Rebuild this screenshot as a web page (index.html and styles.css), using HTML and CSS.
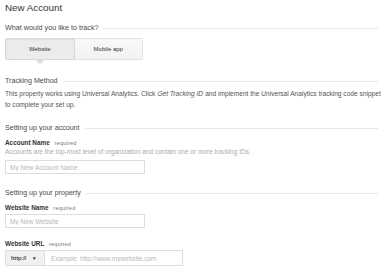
FILE: index.html
```html
<!DOCTYPE html>
<html lang="en">
<head>
  <meta charset="UTF-8"/>
  <title>New Account</title>
  <link rel="stylesheet" href="styles.css">
</head>
<body>
  <div class="page">
    <h1 class="title">New Account</h1>

    <!-- What to track -->
    <div class="section-head first">What would you like to track?</div>
    <div class="segment">
      <button class="seg-btn active">Website</button>
      <button class="seg-btn">Mobile app</button>
    </div>

    <!-- Tracking method -->
    <div class="section-head method">Tracking Method</div>
    <p class="note">This property works using Universal Analytics. Click <em>Get Tracking ID</em> and implement the Universal Analytics tracking code snippet to complete your set up.</p>

    <!-- Account -->
    <div class="section-head">Setting up your account</div>
    <div class="field">
      <label class="field-label">Account Name <span class="req">required</span></label>
      <div class="hint">Accounts are the top-most level of organization and contain one or more tracking IDs.</div>
      <input class="text-input" type="text" placeholder="My New Account Name"/>
    </div>

    <!-- Property -->
    <div class="section-head property">Setting up your property</div>
    <div class="field">
      <label class="field-label">Website Name <span class="req">required</span></label>
      <input class="text-input" type="text" placeholder="My New Website"/>
    </div>
    <div class="field url-field">
      <label class="field-label">Website URL <span class="req">required</span></label>
      <div class="url-group">
        <div class="proto">http:// <span class="caret">&#9662;</span></div>
        <input class="url-input" type="text" placeholder="Example: http://www.mywebsite.com"/>
      </div>
    </div>
  </div>
</body>
</html>
```

FILE: styles.css
```css
* { box-sizing: border-box; }
body {
  margin: 0;
  font-family: 'Liberation Sans', Arial, sans-serif;
  background: #fff;
  color: #444;
  overflow: hidden;
}
.page {
  padding: 1px 4px 0 5px;
}
.title {
  margin: 0;
  font-size: 9.8px;
  font-weight: normal;
  line-height: 14px;
  color: #333;
}

/* Section headings with trailing rule */
.section-head {
  display: flex;
  align-items: center;
  font-size: 7.1px;
  line-height: 10px;
  color: #4a4a4a;
  margin: 13px 8px 0 0;
}
.section-head::after {
  content: "";
  flex: 1;
  height: 1px;
  background: #e8e8e8;
  margin-left: 5px;
}
.section-head.first {
  font-size: 7.2px;
  margin-top: 8px;
}
.section-head.method { margin-top: 16px; }
.section-head.property { margin-top: 14px; }

/* Website / Mobile app toggle */
.segment {
  display: flex;
  width: 138px;
  margin-top: 5px;
}
.seg-btn {
  flex: 1;
  height: 22px;
  font-family: inherit;
  font-size: 6px;
  color: #333;
  background: linear-gradient(#f9f9f9, #f2f2f2);
  border: 1px solid #e2e2e2;
  border-radius: 2px;
  position: relative;
  padding: 0;
}
.seg-btn + .seg-btn {
  border-left: none;
  border-radius: 0 2px 2px 0;
}
.seg-btn.active {
  background: #ececec;
  border-color: #d8d8d8;
  border-radius: 2px 0 0 2px;
  box-shadow: inset 0 1px 2px rgba(0,0,0,0.07);
}
.seg-btn.active::after {
  content: "";
  position: absolute;
  left: 50%;
  bottom: -5px;
  margin-left: -4px;
  border: 4px solid transparent;
  border-bottom: none;
  border-top-color: #dadada;
}

.note {
  margin: 2px 0 0;
  font-size: 6.6px;
  line-height: 11px;
  color: #555;
}
.note em { padding: 0 0.3px; }

/* Form fields */
.field { margin-top: 5px; }
.field-label {
  display: block;
  font-size: 6.4px;
  font-weight: bold;
  color: #333;
  line-height: 9px;
}
.req {
  font-size: 5.6px;
  font-weight: normal;
  color: #777;
  margin-left: 3px;
  letter-spacing: 0.2px;
}
.hint {
  font-size: 6.5px;
  color: #aaa;
  line-height: 8px;
}
.text-input {
  display: block;
  width: 140px;
  height: 14px;
  margin-top: 4px;
  border: 1px solid #dddddd;
  padding: 0 4px;
  font-family: inherit;
  font-size: 6.5px;
  color: #333;
}
.text-input::placeholder,
.url-input::placeholder { color: #b8b8b8; }
.field-label + .text-input { margin-top: 1px; }
.url-field { margin-top: 11px; }

.url-group {
  display: flex;
  margin-top: 1px;
  height: 16px;
  width: 178px;
}
.proto {
  width: 40px;
  display: flex;
  align-items: center;
  gap: 7px;
  padding-left: 5px;
  font-size: 5.5px;
  font-weight: bold;
  color: #444;
  background: #f1f1f1;
  border: 1px solid #dddddd;
}
.caret { font-size: 5px; }
.url-input {
  flex: 1;
  border: 1px solid #dddddd;
  border-left: none;
  padding: 0 6px;
  font-family: inherit;
  font-size: 6.5px;
}
```
